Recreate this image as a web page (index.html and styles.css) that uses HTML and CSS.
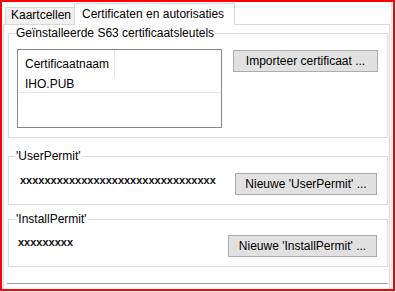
FILE: index.html
```html
<!DOCTYPE html>
<html lang="nl">
<head>
<meta charset="utf-8">
<title>Certificaten en autorisaties</title>
<link rel="stylesheet" href="styles.css">
</head>
<body>
<div class="window">
  <div class="dialog">
    <div class="tabs">
      <div class="tab">Kaartcellen</div>
      <div class="tab tab-active">Certificaten en autorisaties</div>
    </div>
    <div class="panel">
      <fieldset class="group group-certs">
        <legend>Geïnstalleerde S63 certificaatsleutels</legend>
        <div class="certs-body">
          <div class="listview">
            <div class="lv-header"><div class="lv-col">Certificaatnaam</div></div>
            <div class="lv-row">IHO.PUB</div>
          </div>
          <button class="btn btn-import">Importeer certificaat ...</button>
        </div>
      </fieldset>
      <fieldset class="group group-user">
        <legend>'UserPermit'</legend>
        <div class="permit-body permit-user">
          <span class="permit-value">xxxxxxxxxxxxxxxxxxxxxxxxxxxxxxxx</span>
          <button class="btn btn-user">Nieuwe 'UserPermit' ...</button>
        </div>
      </fieldset>
      <fieldset class="group group-install">
        <legend>'InstallPermit'</legend>
        <div class="permit-body permit-install">
          <span class="permit-value">xxxxxxxxx</span>
          <button class="btn btn-install">Nieuwe 'InstallPermit' ...</button>
        </div>
      </fieldset>
      <div class="bottom-rule"></div>
    </div>
  </div>
</div>
</body>
</html>
```

FILE: styles.css
```css
html, body {
  margin: 0;
  padding: 0;
  background: #ffffff;
}

body {
  font-family: "Liberation Sans", Arial, sans-serif;
  font-size: 12px;
  color: #000000;
}

.window {
  width: 395px;
  height: 291px;
  box-sizing: border-box;
  border: 2px solid #ff0000;
  overflow: hidden;
  background: #ffffff;
}

.dialog {
  width: 390px;
  height: 100%;
  box-sizing: border-box;
  border-right: 1px solid #e6e6e6;
  display: flex;
  flex-direction: column;
}

.tabs {
  display: flex;
  align-items: flex-end;
  height: 22px;
  padding-left: 3px;
  position: relative;
  z-index: 1;
  flex: none;
}

.tab {
  box-sizing: border-box;
  height: 17px;
  width: 69px;
  border: 1px solid #d9d9d9;
  border-right: none;
  border-bottom: none;
  background: #f0f0f0;
  padding-left: 5px;
  line-height: 15px;
  white-space: nowrap;
}

.tab-active {
  width: 161px;
  height: 22px;
  margin-bottom: -1px;
  border-right: 1px solid #d9d9d9;
  background: #ffffff;
  padding: 3px 0 0 7px;
}

.panel {
  flex: 1;
  width: 387px;
  margin-left: 1px;
  box-sizing: border-box;
  border: 1px solid #d9d9d9;
  border-bottom: none;
  padding: 1px 1px 0 4px;
}

.group {
  margin: 0;
  padding: 0;
  min-width: 0;
  border: 1px solid #dcdcdc;
}

.group legend {
  margin-left: 6px;
  padding: 0 1px;
  line-height: 15px;
  font-size: 12px;
}

.group-user {
  margin-top: 11px;
}

.group-install {
  margin-top: 7px;
}

.certs-body {
  display: flex;
  align-items: flex-start;
  padding: 8px 0 9px 8px;
}

.listview {
  width: 205px;
  height: 79px;
  box-sizing: border-box;
  border: 1px solid #828790;
  background: #ffffff;
}

.lv-header {
  height: 27px;
}

.lv-col {
  width: 97px;
  height: 27px;
  box-sizing: border-box;
  border-right: 1px solid #e5e5e5;
  padding: 2px 0 0 7px;
  line-height: 25px;
}

.lv-row {
  height: 16px;
  box-sizing: border-box;
  border-bottom: 1px solid #e8e8e8;
  padding-left: 7px;
  line-height: 15px;
}

.btn {
  box-sizing: border-box;
  height: 22px;
  margin: 0;
  padding: 0;
  border: 1px solid #adadad;
  background: #e1e1e1;
  font-family: "Liberation Sans", Arial, sans-serif;
  font-size: 12px;
  line-height: 20px;
  color: #000000;
  text-align: center;
  white-space: nowrap;
}

.btn-import {
  width: 145px;
  margin-left: 11px;
  margin-top: 1px;
}

.btn-user {
  width: 142px;
}

.btn-install {
  width: 149px;
}

.permit-body {
  display: flex;
  justify-content: space-between;
  align-items: flex-start;
}

.permit-user {
  padding: 9px 10px 9px 11px;
}

.permit-install {
  padding: 8px 10px 9px 9px;
}

.permit-value {
  font-family: "Liberation Sans", Arial, sans-serif;
  font-weight: bold;
  font-size: 11px;
  line-height: 15px;
  color: #111111;
}

.bottom-rule {
  width: 381px;
  margin: 16px 0 0 -1px;
  border-top: 1px solid #a0a0a0;
}
```
